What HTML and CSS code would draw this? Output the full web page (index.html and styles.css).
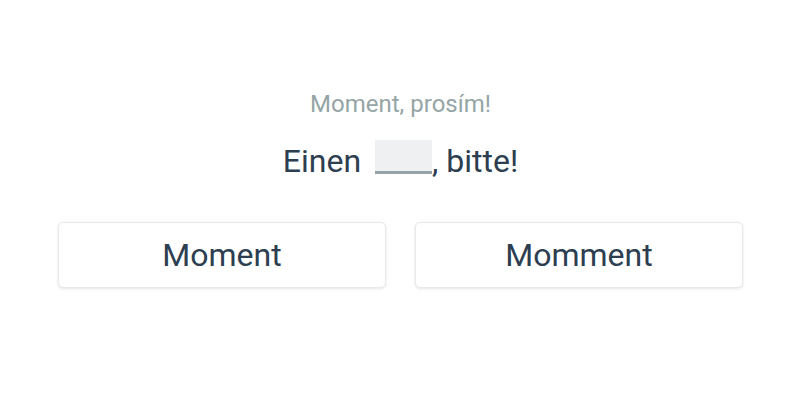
FILE: index.html
```html
<!DOCTYPE html>
<html>
<head>
<meta charset="utf-8">
<link rel="stylesheet" href="styles.css">
</head>
<body>
<div class="quiz">
  <div class="hint">Moment, prosím!</div>
  <div class="sentence">Einen <span class="blank"></span>, bitte!</div>
  <div class="options">
    <button class="option">Moment</button>
    <button class="option">Momment</button>
  </div>
</div>
</body>
</html>
```
FILE: styles.css
```css
html, body {
  margin: 0;
  padding: 0;
  background: #ffffff;
  font-family: Roboto, "Noto Sans", sans-serif;
}
.quiz {
  width: 800px;
  height: 400px;
  box-sizing: border-box;
  padding: 90px 57px 0 58px;
  display: flex;
  flex-direction: column;
  align-items: center;
}
.hint {
  color: #95a5a6;
  font-size: 24px;
  line-height: 28px;
}
.sentence {
  margin-top: 22px;
  color: #2c3e50;
  font-size: 32px;
  line-height: 42px;
  white-space: nowrap;
}
.blank {
  display: inline-block;
  width: 57px;
  height: 31px;
  background: #eef0f2;
  border-bottom: 3px solid #95a5a6;
  margin-left: 6px;
  vertical-align: -2px;
}
.options {
  margin-top: 40px;
  width: 100%;
  display: flex;
  gap: 29px;
}
.option {
  flex: 1;
  height: 66px;
  background: #ffffff;
  border: 1px solid #e8e9ea;
  border-radius: 5px;
  box-shadow: 0 1px 3px rgba(0,0,0,0.1);
  color: #2c3e50;
  font-family: Roboto, "Noto Sans", sans-serif;
  font-size: 32px;
  padding: 0;
}
```
